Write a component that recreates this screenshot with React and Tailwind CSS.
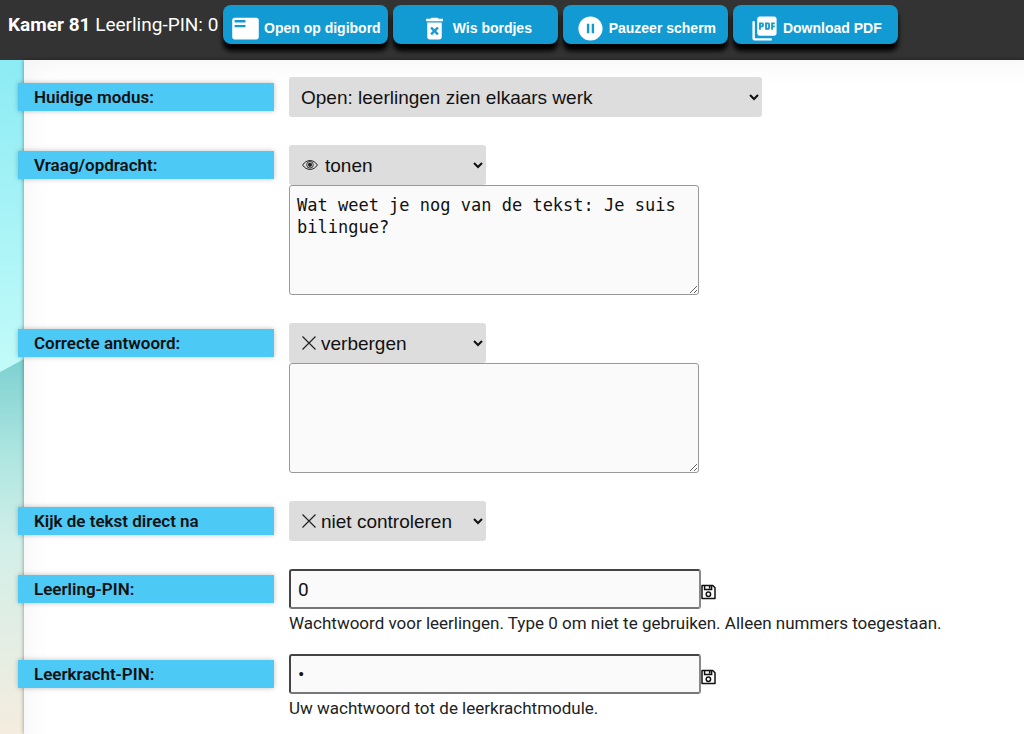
import React, { useState } from 'react';
import {
  MdFeaturedPlayList,
  MdDeleteForever,
  MdPauseCircleFilled,
  MdPictureAsPdf
} from 'react-icons/md';

const actions = [
  { label: 'Open op digibord', icon: MdFeaturedPlayList },
  { label: 'Wis bordjes', icon: MdDeleteForever },
  { label: 'Pauzeer scherm', icon: MdPauseCircleFilled },
  { label: 'Download PDF', icon: MdPictureAsPdf }
];

const EyeIcon = () => (
  <svg width="16" height="12" viewBox="0 0 16 12" fill="none" stroke="#222">
    <path d="M0.6 6C2.6 3 5 1.6 8 1.6S13.4 3 15.4 6C13.4 9 11 10.4 8 10.4S2.6 9 0.6 6Z" />
    <circle cx="8" cy="5.8" r="3.3" strokeWidth="0.9" />
    <circle cx="8" cy="5.8" r="2.1" fill="#222" stroke="none" />
  </svg>
);

const CrossIcon = () => (
  <svg width="14" height="14" viewBox="0 0 14 14" fill="none" stroke="#222" strokeWidth="1.2">
    <path d="M0.5 0.5L13.5 13.5M13.5 0.5L0.5 13.5" />
  </svg>
);

const SaveIcon = () => (
  <svg width="15" height="16" viewBox="0 0 15 16" fill="none" stroke="#111" strokeWidth="1.5">
    <path d="M1 1.5H11.8L14 3.7V14.5H1Z" strokeLinejoin="round" />
    <path d="M3.6 1.5V5.6H10.6V1.5M8.6 2V4.6" />
    <circle cx="7.4" cy="10.2" r="2.2" />
  </svg>
);

/* Gradient landscape that shows to the left of the panel */
const Backdrop = () => (
  <svg className="h-full w-full" viewBox="0 0 24 674" preserveAspectRatio="none">
    <defs>
      <linearGradient id="sky" x1="0" y1="0" x2="0" y2="1">
        <stop offset="0" stopColor="#8cebf4" />
        <stop offset="1" stopColor="#c3fbf9" />
      </linearGradient>
      <linearGradient id="hill" x1="0" y1="0" x2="0" y2="1">
        <stop offset="0" stopColor="#7dd1d1" />
        <stop offset="0.25" stopColor="#ade5e0" />
        <stop offset="0.5" stopColor="#d3efe9" />
        <stop offset="1" stopColor="#f4ecdf" />
      </linearGradient>
    </defs>
    <path d="M0 0H24V314H0Z" fill="url(#sky)" />
    <path d="M0 312L24 299V674H0Z" fill="url(#hill)" />
  </svg>
);

const Row = ({ id, label, children }) => (
  <div className="flex items-start gap-[15px]">
    <label
      htmlFor={id}
      className="-ml-1.5 mt-1.5 w-64 shrink-0 bg-[#4dc9f6] pl-4 text-[17px] leading-7 font-semibold text-[#111] shadow-[0_0_5px_rgba(0,0,0,0.25)]"
    >
      {label}
    </label>
    <div className="min-w-0 flex-1">{children}</div>
  </div>
);

const Select = ({ id, options, icon, className }) => (
  <div className="relative flex">
    <select
      id={id}
      className={`h-10 rounded-[3px] bg-[#ddd] font-['Liberation_Sans',sans-serif] text-[19px] text-[#111] ${className}`}
    >
      {options.map((option) => (
        <option key={option}>{option}</option>
      ))}
    </select>
    {icon && (
      <span className="pointer-events-none absolute inset-y-0 left-[13px] flex items-center">
        {icon}
      </span>
    )}
  </div>
);

const TextArea = ({ id, label, value }) => (
  <textarea
    id={id}
    aria-label={label}
    defaultValue={value}
    className="block h-[110px] w-[410px] max-w-full resize rounded-[3px] border border-[#999] bg-[#fafafa] px-[7px] py-2 font-['DejaVu_Sans_Mono',monospace] text-[17px] leading-[22px] text-[#111]"
  />
);

const PinField = ({ id, type, initial, hint }) => {
  const [pin, setPin] = useState(initial);

  return (
    <>
      <div className="flex items-center">
        <input
          id={id}
          type={type}
          value={pin}
          onChange={(e) => setPin(e.target.value)}
          className="h-10 w-[412px] max-w-full rounded-[3px] border-2 border-t-[#444] border-r-[#888] border-b-[#777] border-l-[#444] bg-[#fafafa] px-[7px] text-[19px] text-[#111]"
        />
        <button type="button" aria-label="Opslaan" className="mt-1.5">
          <SaveIcon />
        </button>
      </div>
      <p className="text-[17px] leading-7 text-[#222]">{hint}</p>
    </>
  );
};

const App = () => {
  return (
    <div className="flex min-h-screen flex-col font-[Roboto,sans-serif]">
      <header className="flex h-[60px] items-start gap-[5px] bg-[#333] pt-[5px] pl-2 text-white">
        <h1 className="text-[19px] leading-10 whitespace-nowrap">
          <b>Kamer 81</b> Leerling-PIN: 0
        </h1>
        {actions.map(({ label, icon: Icon }) => (
          <button
            key={label}
            type="button"
            className="flex h-[39px] w-[165px] items-center justify-center gap-1 rounded-lg bg-[#129bd2] pt-[7px] font-['Liberation_Sans',sans-serif] text-[14px] font-bold whitespace-nowrap shadow-[0_7px_5px_#000]"
          >
            <Icon size={29} />
            {label}
          </button>
        ))}
      </header>

      <div className="flex flex-1">
        <div className="relative w-6 shrink-0">
          <div className="absolute inset-0">
            <Backdrop />
          </div>
        </div>
        <main className="relative flex min-w-0 flex-1 flex-col gap-[17px] bg-white pt-[17px] shadow-[0_0_4px_rgba(0,0,0,0.4),inset_20px_20px_30px_-20px_rgba(0,0,0,0.06)]">
          <div className="flex flex-col gap-7 pb-[11px]">
            <Row id="mode" label="Huidige modus:">
              <Select
                id="mode"
                options={['Open: leerlingen zien elkaars werk']}
                className="w-[473px] pl-2"
              />
            </Row>

            <Row id="question-visibility" label="Vraag/opdracht:">
              <Select
                id="question-visibility"
                options={['tonen', 'verbergen']}
                icon={<EyeIcon />}
                className="w-[197px] pl-8"
              />
              <TextArea
                id="question"
                label="Vraag/opdracht"
                value="Wat weet je nog van de tekst: Je suis bilingue?"
              />
            </Row>

            <Row id="answer-visibility" label="Correcte antwoord:">
              <Select
                id="answer-visibility"
                options={['verbergen', 'tonen']}
                icon={<CrossIcon />}
                className="w-[197px] pl-7"
              />
              <TextArea id="answer" label="Correcte antwoord" value="" />
            </Row>

            <Row id="check" label="Kijk de tekst direct na">
              <Select
                id="check"
                options={['niet controleren', 'controleren']}
                icon={<CrossIcon />}
                className="w-[197px] pl-7"
              />
            </Row>
          </div>

          <Row id="student-pin" label="Leerling-PIN:">
            <PinField
              id="student-pin"
              type="text"
              initial="0"
              hint="Wachtwoord voor leerlingen. Type 0 om niet te gebruiken. Alleen nummers toegestaan."
            />
          </Row>

          <Row id="teacher-pin" label="Leerkracht-PIN:">
            <PinField
              id="teacher-pin"
              type="password"
              initial="0"
              hint="Uw wachtwoord tot de leerkrachtmodule."
            />
          </Row>
        </main>
      </div>
    </div>
  );
};

export default App;
